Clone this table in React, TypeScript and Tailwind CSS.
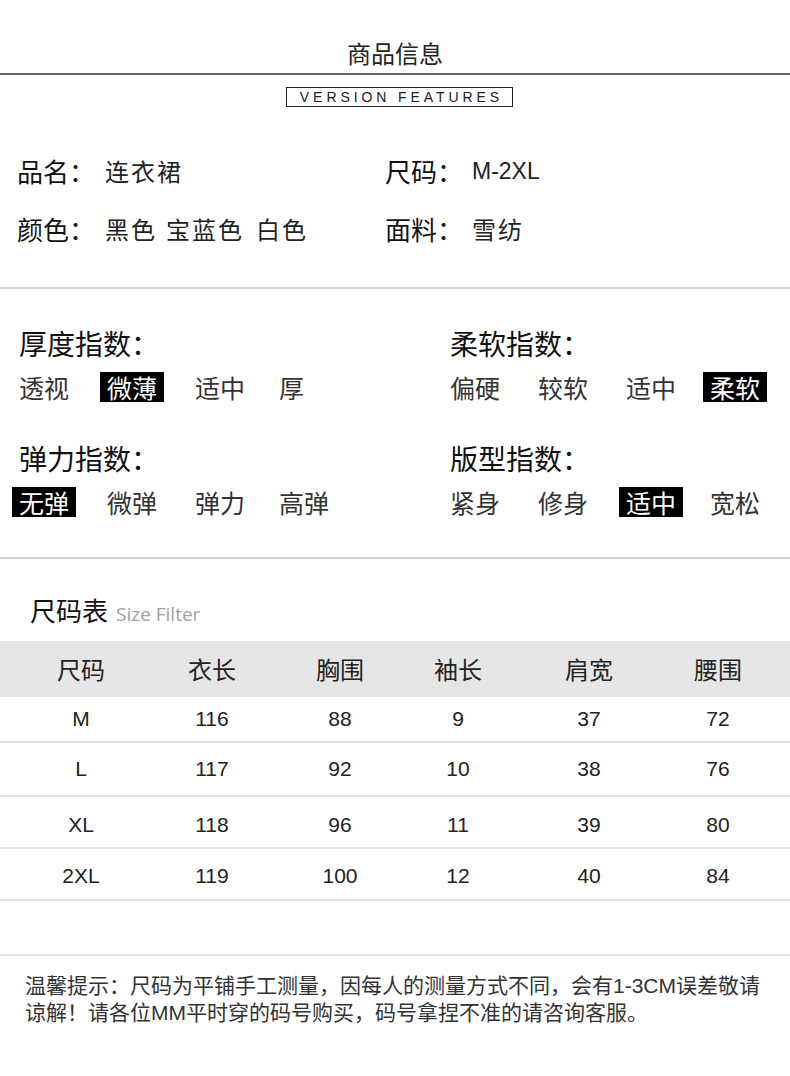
const cjk = { fontFamily: '"Noto Sans CJK SC", "Liberation Sans", sans-serif' }
const latin = { fontFamily: '"Liberation Sans", "Noto Sans CJK SC", sans-serif' }

const indexes = [
  [
    { title: '厚度指数：', options: ['透视', '微薄', '适中', '厚'], active: 1 },
    { title: '弹力指数：', options: ['无弹', '微弹', '弹力', '高弹'], active: 0 },
  ],
  [
    { title: '柔软指数：', options: ['偏硬', '较软', '适中', '柔软'], active: 3 },
    { title: '版型指数：', options: ['紧身', '修身', '适中', '宽松'], active: 2 },
  ],
]

const headers = ['尺码', '衣长', '胸围', '袖长', '肩宽', '腰围']

const rows = [
  { h: 'h-[46px]', cells: ['M', '116', '88', '9', '37', '72'] },
  { h: 'h-[54px]', cells: ['L', '117', '92', '10', '38', '76'] },
  { h: 'h-[52px] pt-[6px]', cells: ['XL', '118', '96', '11', '39', '80'] },
  { h: 'h-[52px] pt-[4px]', cells: ['2XL', '119', '100', '12', '40', '84'] },
  { h: 'h-[55px]', cells: ['', '', '', '', '', ''] },
]

function IndexBlock({ title, options, active, first }: { title: string; options: string[]; active: number; first: boolean }) {
  return (
    <div className={first ? '' : 'mt-[38px]'}>
      <div className="text-[28px] leading-[36px] text-[#111]">{title}</div>
      <div className="flex mt-[11px] text-[25px] leading-[30px] text-[#333]">
        {options.map((o, i) => (
          <div key={o + i} className={i === 2 ? 'w-[84px] shrink-0' : 'w-[88px] shrink-0'}>
            {i === active ? (
              <span className="inline-block bg-black text-white px-[7px] -ml-[7px]">{o}</span>
            ) : (
              <span>{o}</span>
            )}
          </div>
        ))}
      </div>
    </div>
  )
}

export default function App() {
  return (
    <div className="w-[790px] h-[1076px] bg-white overflow-hidden" style={cjk}>
      <div className="pt-[36px] pb-[3px] border-b-2 border-[#666] text-center text-[24px] leading-[34px] text-[#222]">
        商品信息
      </div>

      <div className="flex justify-center pl-[9px] mt-[12px]">
        <div
          className="w-[227px] h-[20px] border-[1.5px] border-[#222] flex items-center justify-center pl-[4px] text-[14px] tracking-[0.28em] text-[#222]"
          style={latin}
        >
          VERSION FEATURES
        </div>
      </div>

      <div className="pl-[17px] mt-[44px] pb-[38px] border-b-2 border-[#d0d0d0]">
        <div className="flex leading-[40px]">
          <div className="w-[368px] shrink-0 flex">
            <span className="w-[88px] text-[26px] text-[#111]">品名：</span>
            <span className="text-[24px] tracking-[2px] text-[#222]">连衣裙</span>
          </div>
          <div className="flex">
            <span className="w-[87px] text-[26px] text-[#111]">尺码：</span>
            <span className="text-[23px] text-[#222]" style={latin}>M-2XL</span>
          </div>
        </div>
        <div className="flex leading-[40px] mt-[18px]">
          <div className="w-[368px] shrink-0 flex">
            <span className="w-[88px] text-[26px] text-[#111]">颜色：</span>
            <span className="text-[24px] tracking-[2px] text-[#222]">黑色</span>
            <span className="ml-[9px] text-[24px] tracking-[2px] text-[#222]">宝蓝色</span>
            <span className="ml-[12px] text-[24px] tracking-[2px] text-[#222]">白色</span>
          </div>
          <div className="flex">
            <span className="w-[87px] text-[26px] text-[#111]">面料：</span>
            <span className="text-[24px] tracking-[2px] text-[#222]">雪纺</span>
          </div>
        </div>
      </div>

      <div className="flex pl-[19px] pt-[36px] pb-[40px] border-b-2 border-[#d0d0d0]">
        {indexes.map((col, ci) => (
          <div key={ci} className={ci === 0 ? 'w-[431px] shrink-0' : 'shrink-0'}>
            {col.map((b, bi) => (
              <IndexBlock key={b.title} {...b} first={bi === 0} />
            ))}
          </div>
        ))}
      </div>

      <div className="pl-[30px] mt-[33px] mb-[9px] flex items-baseline leading-[36px]">
        <span className="text-[26px] text-[#111]">尺码表</span>
        <span className="ml-[8px] text-[19px] text-[#a0a0a0]" style={{ fontFamily: '"Open Sans", sans-serif' }}>
          Size Filter
        </span>
      </div>

      <div className="grid grid-cols-[162px_100px_156px_80px_182px_76px] h-[56px] items-center bg-[#e6e6e6] text-[24px] text-[#222]">
        {headers.map((h) => (
          <div key={h} className="text-center">{h}</div>
        ))}
      </div>

      {rows.map((r, ri) => (
        <div
          key={ri}
          className={`grid grid-cols-[162px_100px_156px_80px_182px_76px] items-center border-b-2 border-[#e3e3e3] text-[21px] text-[#222] ${r.h}`}
          style={latin}
        >
          {r.cells.map((c, ci) => (
            <div key={ci} className="text-center">{c}</div>
          ))}
        </div>
      ))}

      <div className="pl-[25px] mt-[16px] text-[21px] leading-[27px] text-[#333] whitespace-nowrap" style={latin}>
        <div>温馨提示：尺码为平铺手工测量，因每人的测量方式不同，会有1-3CM误差敬请</div>
        <div>谅解！请各位MM平时穿的码号购买，码号拿捏不准的请咨询客服。</div>
      </div>
    </div>
  )
}
